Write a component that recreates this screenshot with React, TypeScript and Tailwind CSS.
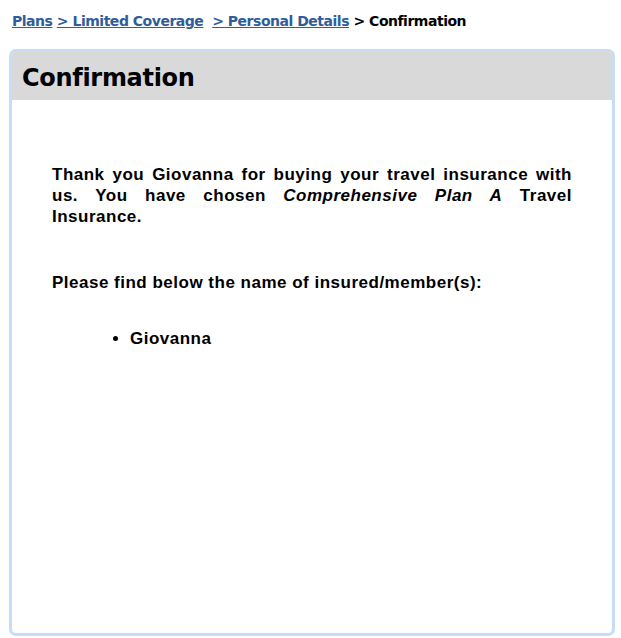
export default function App() {
  return (
    <div className="w-[621px] h-[638px] bg-white relative overflow-hidden">
      {/* breadcrumb */}
      <div className="pt-[12px] pl-[12px] h-[49px] text-[14px] font-bold font-['DejaVu_Sans',sans-serif] leading-[18px] tracking-[-0.48px] whitespace-nowrap">
        <a href="#" className="text-[#2f5d9b] underline">Plans</a>{" "}
        <a href="#" className="text-[#2f5d9b] underline">&gt; Limited Coverage</a>{"\u00a0 "}
        <a href="#" className="text-[#2f5d9b] underline">&gt; Personal Details</a>{" "}
        <span className="text-black">&gt; Confirmation</span>
      </div>

      {/* panel */}
      <div className="mx-[9px] w-[606px] h-[587px] border-[3px] border-[#c7ddf6] rounded-[7px] overflow-hidden flex flex-col">
        <div className="h-[48px] bg-[#d9d9d9] pl-[10px] pt-[4px] flex items-center">
          <h1 className="text-[24px] font-bold font-['DejaVu_Sans',sans-serif] text-black leading-none tracking-[-0.3px]">
            Confirmation
          </h1>
        </div>
        <div className="px-[40px] pt-[64px] font-['Liberation_Sans',Arial,sans-serif] font-bold text-[17px] leading-[21px] tracking-[0.5px] text-black">
          <p className="text-justify">
            Thank you Giovanna for buying your travel insurance with us. You have chosen <i>Comprehensive Plan A</i> Travel Insurance.
          </p>
          <p className="mt-[45px]">Please find below the name of insured/member(s):</p>
          <ul className="mt-[35px] pl-[78px] list-disc">
            <li>Giovanna</li>
          </ul>
        </div>
      </div>
    </div>
  );
}
